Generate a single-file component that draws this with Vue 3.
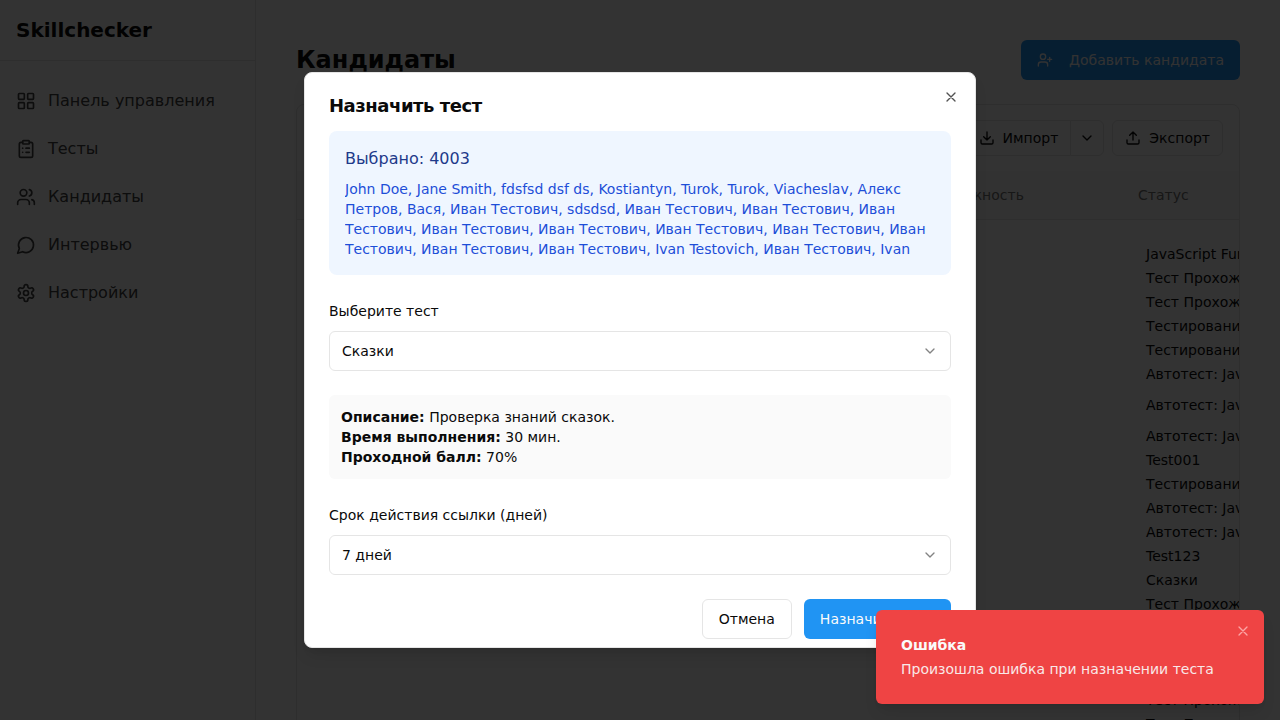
<script setup>
const icons = {
  grid: '<rect width="7" height="7" x="3" y="3" rx="1"/><rect width="7" height="7" x="14" y="3" rx="1"/><rect width="7" height="7" x="14" y="14" rx="1"/><rect width="7" height="7" x="3" y="14" rx="1"/>',
  clipboard: '<rect width="8" height="4" x="8" y="2" rx="1" ry="1"/><path d="M16 4h2a2 2 0 0 1 2 2v14a2 2 0 0 1-2 2H6a2 2 0 0 1-2-2V6a2 2 0 0 1 2-2h2"/><path d="M12 11h4"/><path d="M12 16h4"/><path d="M8 11h.01"/><path d="M8 16h.01"/>',
  users: '<path d="M16 21v-2a4 4 0 0 0-4-4H6a4 4 0 0 0-4 4v2"/><circle cx="9" cy="7" r="4"/><path d="M22 21v-2a4 4 0 0 0-3-3.87"/><path d="M16 3.13a4 4 0 0 1 0 7.75"/>',
  message: '<path d="M7.9 20A9 9 0 1 0 4 16.1L2 22Z"/>',
  settings: '<path d="M12.22 2h-.44a2 2 0 0 0-2 2v.18a2 2 0 0 1-1 1.73l-.43.25a2 2 0 0 1-2 0l-.15-.08a2 2 0 0 0-2.73.73l-.22.38a2 2 0 0 0 .73 2.73l.15.1a2 2 0 0 1 1 1.72v.51a2 2 0 0 1-1 1.74l-.15.09a2 2 0 0 0-.73 2.73l.22.38a2 2 0 0 0 2.73.73l.15-.08a2 2 0 0 1 2 0l.43.25a2 2 0 0 1 1 1.73V20a2 2 0 0 0 2 2h.44a2 2 0 0 0 2-2v-.18a2 2 0 0 1 1-1.73l.43-.25a2 2 0 0 1 2 0l.15.08a2 2 0 0 0 2.73-.73l.22-.39a2 2 0 0 0-.73-2.73l-.15-.08a2 2 0 0 1-1-1.74v-.5a2 2 0 0 1 1-1.74l.15-.09a2 2 0 0 0 .73-2.73l-.22-.38a2 2 0 0 0-2.73-.73l-.15.08a2 2 0 0 1-2 0l-.43-.25a2 2 0 0 1-1-1.73V4a2 2 0 0 0-2-2z"/><circle cx="12" cy="12" r="3"/>',
}
const menu = [
  ['grid', 'Панель управления'],
  ['clipboard', 'Тесты'],
  ['users', 'Кандидаты'],
  ['message', 'Интервью'],
  ['settings', 'Настройки'],
]
const run = 'Тест Прохождение'
const testing = 'Тестирование'
const auto = 'Автотест: JavaScript'
const tests = [
  { t: 'JavaScript Fundamentals' }, { t: run }, { t: run }, { t: testing }, { t: testing }, { t: auto },
  { t: auto, tall: true }, { t: auto }, { t: 'Test001' }, { t: testing }, { t: auto }, { t: auto },
  { t: 'Test123' }, { t: 'Сказки' }, { t: run }, { t: run }, { t: run }, { t: run }, { t: run }, { t: run },
]
const names = 'John Doe, Jane Smith, fdsfsd dsf ds, Kostiantyn, Turok, Turok, Viacheslav, Алекс Петров, Вася, Иван Тестович, sdsdsd, Иван Тестович, Иван Тестович, Иван Тестович, Иван Тестович, Иван Тестович, Иван Тестович, Иван Тестович, Иван Тестович, Иван Тестович, Иван Тестович, Ivan Testovich, Иван Тестович, Ivan Testovich'
</script>

<template>
  <div class="page">
    <aside class="sidebar">
      <div class="brand">Skillchecker</div>
      <nav>
        <a v-for="[icon, label] in menu" :key="label" class="nav-item">
          <svg class="icon i20" viewBox="0 0 24 24" v-html="icons[icon]"></svg>
          <span>{{ label }}</span>
        </a>
      </nav>
    </aside>
    <main class="main">
      <header class="head">
        <h1>Кандидаты</h1>
        <button class="btn primary add">
          <svg class="icon i16" viewBox="0 0 24 24"><path d="M16 21v-2a4 4 0 0 0-4-4H6a4 4 0 0 0-4 4v2" /><circle cx="9" cy="7" r="4" /><path d="M19 8v6M22 11h-6" /></svg>
          Добавить кандидата
        </button>
      </header>
      <section class="card">
        <div class="toolbar">
          <div class="split">
            <button class="tool first"><svg class="icon i16" viewBox="0 0 24 24"><path d="M21 15v4a2 2 0 0 1-2 2H5a2 2 0 0 1-2-2v-4M7 10l5 5 5-5M12 15V3" /></svg>Импорт</button>
            <button class="tool arrow"><svg class="icon i16" viewBox="0 0 24 24"><path d="m6 9 6 6 6-6" /></svg></button>
          </div>
          <button class="tool"><svg class="icon i16" viewBox="0 0 24 24"><path d="M21 15v4a2 2 0 0 1-2 2H5a2 2 0 0 1-2-2v-4M17 8l-5-5-5 5M12 3v12" /></svg>Экспорт</button>
        </div>
        <div class="thead"><span class="job">Должность</span><span class="status">Статус</span></div>
        <div class="tests">
          <div v-for="(x, i) in tests" :key="i" class="test" :class="{ tall: x.tall }">{{ x.t }}</div>
        </div>
      </section>
    </main>

    <div class="overlay">
      <div class="modal">
        <svg class="icon i16 close" viewBox="0 0 24 24"><path d="M18 6 6 18M6 6l12 12" /></svg>
        <h2>Назначить тест</h2>
        <div class="selected">
          <div class="count">Выбрано: 4003</div>
          <div class="names">{{ names }}</div>
        </div>
        <label>Выберите тест</label>
        <div class="select">Сказки<svg class="icon i16" viewBox="0 0 24 24"><path d="m6 9 6 6 6-6" /></svg></div>
        <div class="info">
          <div><b>Описание:</b> Проверка знаний сказок.</div>
          <div><b>Время выполнения:</b> 30 мин.</div>
          <div><b>Проходной балл:</b> 70%</div>
        </div>
        <label>Срок действия ссылки (дней)</label>
        <div class="select">7 дней<svg class="icon i16" viewBox="0 0 24 24"><path d="m6 9 6 6 6-6" /></svg></div>
        <div class="actions">
          <button class="btn outline">Отмена</button>
          <button class="btn primary">Назначить тест</button>
        </div>
      </div>
    </div>

    <div class="toast">
      <svg class="icon i16 toast-close" viewBox="0 0 24 24"><path d="M18 6 6 18M6 6l12 12" /></svg>
      <div class="toast-title">Ошибка</div>
      <div class="toast-text">Произошла ошибка при назначении теста</div>
    </div>
  </div>
</template>

<style>
html, body { overflow: hidden; }
</style>

<style scoped>
* { box-sizing: border-box; }
.page { position: relative; display: flex; width: 1280px; height: 720px; overflow: hidden; background: #fff; color: #0a0a0a; font: 14px/20px "DejaVu Sans", sans-serif; }
button { font: inherit; color: inherit; margin: 0; }
.icon { fill: none; stroke: currentColor; stroke-width: 2; stroke-linecap: round; stroke-linejoin: round; flex: none; }
.i20 { width: 20px; height: 20px; }
.i16 { width: 16px; height: 16px; }
.sidebar { width: 256px; border-right: 1px solid #e5e5e5; }
.brand { height: 61px; padding: 16px; border-bottom: 1px solid #e5e5e5; font-size: 20px; line-height: 28px; font-weight: 700; }
nav { padding: 16px 0; }
.nav-item { display: flex; align-items: center; gap: 12px; height: 48px; padding: 0 16px; font-size: 16px; line-height: 24px; color: #404040; }
.main { flex: 1; padding: 40px 40px 0; min-width: 0; }
.head { display: flex; justify-content: space-between; align-items: center; height: 40px; }
h1 { margin: 0; font-size: 24px; line-height: 32px; font-weight: 700; }
.btn { display: flex; align-items: center; justify-content: center; height: 40px; padding: 0 16px; border: 0; border-radius: 6px; white-space: nowrap; }
.primary { background: #2094f3; color: #fafafa; }
.add { gap: 16px; }
.card { margin-top: 24px; height: 700px; border: 1px solid #e5e5e5; border-radius: 8px; overflow: hidden; }
.toolbar { display: flex; justify-content: flex-end; gap: 8px; padding: 15px 16px; }
.split { display: flex; }
.tool { display: flex; align-items: center; gap: 8px; height: 36px; padding: 0 12px; border: 1px solid #e5e5e5; border-radius: 6px; background: #fff; }
.first { border-radius: 6px 0 0 6px; border-right: 0; }
.arrow { padding: 0 8px; border-radius: 0 6px 6px 0; }
.thead { display: flex; align-items: center; height: 49px; background: #fafafa; border-bottom: 1px solid #e5e5e5; color: #737373; }
.job { width: 197px; margin-left: 644px; }
.tests { margin: 22px 0 0 849px; white-space: nowrap; }
.test { height: 24px; line-height: 24px; }
.tall { height: 38px; line-height: 38px; }
.overlay { position: absolute; inset: 0; display: flex; align-items: center; justify-content: center; background: rgba(0, 0, 0, .8); }
.modal { position: relative; width: 672px; height: 576px; padding: 24px; overflow: hidden; background: #fff; border: 1px solid #e5e5e5; border-radius: 8px; box-shadow: 0 10px 15px -3px rgba(0, 0, 0, .1), 0 4px 6px -4px rgba(0, 0, 0, .1); }
.close { position: absolute; right: 16px; top: 16px; opacity: .7; }
h2 { margin: 0 0 16px; font-size: 18px; line-height: 18px; font-weight: 600; letter-spacing: -.45px; }
.selected { padding: 16px; background: #eff6ff; border-radius: 8px; margin-bottom: 24px; }
.count { margin-bottom: 8px; font-size: 16px; line-height: 24px; color: #1e3a8a; }
.names { height: 80px; overflow: hidden; color: #1d4ed8; }
label { display: block; line-height: 24px; margin-bottom: 8px; }
.select { display: flex; align-items: center; justify-content: space-between; height: 40px; padding: 0 12px; border: 1px solid #e5e5e5; border-radius: 6px; margin-bottom: 24px; }
.select .icon { opacity: .5; }
.info { padding: 12px; background: #fafafa; border-radius: 6px; margin-bottom: 24px; }
.actions { display: flex; justify-content: flex-end; gap: 12px; }
.outline { background: #fff; border: 1px solid #e5e5e5; }
.toast { position: absolute; right: 16px; bottom: 16px; width: 388px; height: 94px; padding: 25px; border-radius: 6px; background: #ef4444; color: #fafafa; box-shadow: 0 10px 15px -3px rgba(0, 0, 0, .1), 0 4px 6px -4px rgba(0, 0, 0, .1); }
.toast-title { font-weight: 600; margin-bottom: 4px; }
.toast-text { opacity: .9; }
.toast-close { position: absolute; right: 13px; top: 13px; color: #fca5a5; }
</style>
